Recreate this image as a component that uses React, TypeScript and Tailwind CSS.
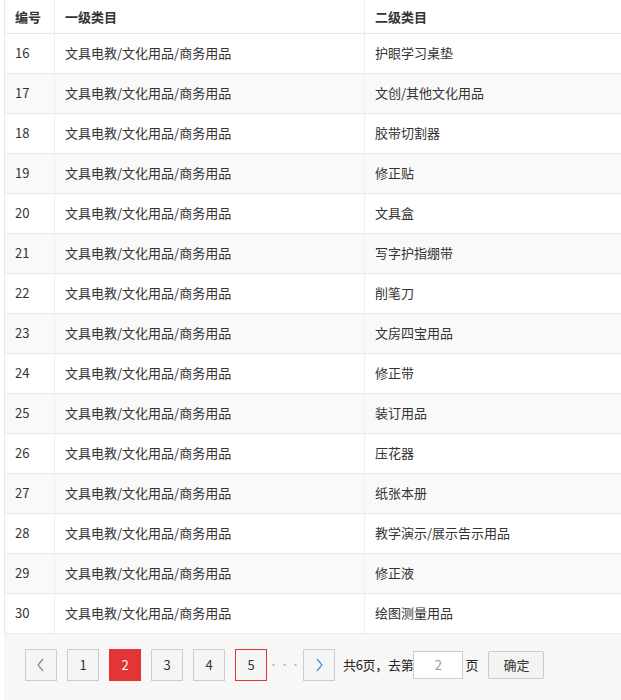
const rows: [number, string][] = [
  [16, "护眼学习桌垫"],
  [17, "文创/其他文化用品"],
  [18, "胶带切割器"],
  [19, "修正贴"],
  [20, "文具盒"],
  [21, "写字护指绷带"],
  [22, "削笔刀"],
  [23, "文房四宝用品"],
  [24, "修正带"],
  [25, "装订用品"],
  [26, "压花器"],
  [27, "纸张本册"],
  [28, "教学演示/展示告示用品"],
  [29, "修正液"],
  [30, "绘图测量用品"],
];

export default function App() {
  return (
    <div
      className="w-[621px] h-[700px] overflow-hidden bg-white text-[13px] text-[#333]"
      style={{ fontFamily: '"Microsoft YaHei", "Noto Sans CJK SC", sans-serif' }}
    >
      <div className="pl-1">
        <table className="w-[640px] border-collapse border-l border-[#e8e8e8] table-fixed">
          <colgroup>
            <col className="w-[50px]" />
            <col className="w-[310px]" />
            <col />
          </colgroup>
          <thead>
            <tr className="h-[33px] border-b border-[#e8e8e8]">
              <th className="text-left font-bold pl-[10px] border-r border-[#eee]">编号</th>
              <th className="text-left font-bold pl-[10px] border-r border-[#eee]">一级类目</th>
              <th className="text-left font-bold pl-[10px]">二级类目</th>
            </tr>
          </thead>
          <tbody>
            {rows.map(([id, name], i) => (
              <tr
                key={id}
                className={`h-[40px] border-b border-[#e8e8e8] ${i % 2 === 1 ? "bg-[#f9f9f9]" : "bg-white"}`}
              >
                <td className="pl-[10px] border-r border-[#eee]">{id}</td>
                <td className="pl-[10px] border-r border-[#eee]">文具电教/文化用品/商务用品</td>
                <td className="pl-[10px]">{name}</td>
              </tr>
            ))}
          </tbody>
        </table>
        <div className="h-[70px] bg-[#f7f7f7] flex items-start pt-[15px] pl-[21px] text-[13px]">
          <div className="flex items-center">
            <button className="w-[32px] h-[32px] border border-[#ccc] bg-[#f5f5f5] flex items-center justify-center">
              <svg width="10" height="14" viewBox="0 0 10 14" fill="none" stroke="#888" strokeWidth="1.2">
                <path d="M7 1 L2 7 L7 13" />
              </svg>
            </button>
            <button className="ml-[10px] w-[32px] h-[32px] border border-[#ccc] bg-[#f5f5f5] text-[#333]">1</button>
            <button className="ml-[10px] w-[32px] h-[32px] bg-[#e33535] text-white">2</button>
            <button className="ml-[10px] w-[32px] h-[32px] border border-[#ccc] bg-[#f5f5f5] text-[#333]">3</button>
            <button className="ml-[10px] w-[32px] h-[32px] border border-[#ccc] bg-[#f5f5f5] text-[#333]">4</button>
            <button className="ml-[10px] w-[32px] h-[32px] border border-[#e33535] bg-[#f5f5f5] text-[#333]">5</button>
            <span className="w-[36px] text-center text-[#bbb] tracking-[1px] text-[10px]">···</span>
            <button className="w-[32px] h-[32px] border border-[#ccc] bg-[#f5f5f5] flex items-center justify-center">
              <svg width="10" height="14" viewBox="0 0 10 14" fill="none" stroke="#4a8fd6" strokeWidth="1.2">
                <path d="M3 1 L8 7 L3 13" />
              </svg>
            </button>
            <span className="ml-[8px] text-[#222] tracking-[-0.3px]">共6页，去第</span>
            <input
              defaultValue="2"
              className="w-[50px] h-[28px] border border-[#ccc] bg-white text-center text-[#999] outline-none"
            />
            <span className="ml-[2px] text-[#222]">页</span>
            <button className="ml-[10px] w-[56px] h-[28px] border border-[#ccc] rounded-[2px] bg-[#f3f3f3] text-[#333]">
              确定
            </button>
          </div>
        </div>
      </div>
    </div>
  );
}
